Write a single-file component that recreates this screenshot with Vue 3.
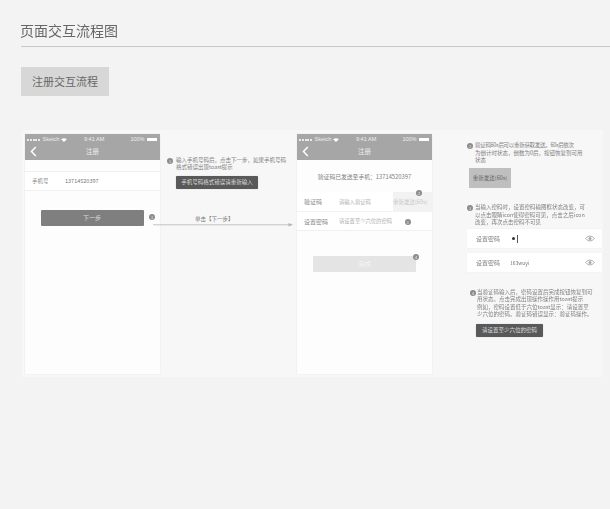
<script setup>
const statusDots = 5
</script>

<template>
  <div class="page">
    <h1 class="title">页面交互流程图</h1>
    <div class="rule"></div>
    <div class="tag">注册交互流程</div>

    <section class="panel">
      <div class="phone">
        <header class="head">
          <div class="status">
            <span class="carrier"><i v-for="n in statusDots" :key="n" class="dot"></i> Sketch
              <svg class="wifi" viewBox="0 0 10 7" width="6" height="4"><path d="M0 2.4a7 7 0 0 1 10 0L5 7z" fill="#fff"/></svg>
            </span>
            <span class="clock">9:41 AM</span>
            <span class="batt">100% <i class="cell"></i></span>
          </div>
          <div class="nav">
            <svg class="back" viewBox="0 0 7 11" width="7" height="11"><path d="M5.8 1 1.5 5.5l4.3 4.5" fill="none" stroke="#fff" stroke-width="1.5"/></svg>
            <span>注册</span>
          </div>
        </header>
        <div class="row first-row">
          <span class="lab">手机号</span><span class="val">13714520397</span>
        </div>
        <div class="next">下一步</div>
      </div>

      <div class="mid">
        <div class="note"><i class="num">1</i><p>输入手机号码后，点击下一步，如果手机号码<br>格式错误出现toast提示</p></div>
        <div class="toast toast-a">手机号码格式错误请重新输入</div>
        <div class="click">单击【下一步】</div>
      </div>

      <div class="phone">
        <header class="head">
          <div class="status">
            <span class="carrier"><i v-for="n in statusDots" :key="n" class="dot"></i> Sketch
              <svg class="wifi" viewBox="0 0 10 7" width="6" height="4"><path d="M0 2.4a7 7 0 0 1 10 0L5 7z" fill="#fff"/></svg>
            </span>
            <span class="clock">9:41 AM</span>
            <span class="batt">100% <i class="cell"></i></span>
          </div>
          <div class="nav">
            <svg class="back" viewBox="0 0 7 11" width="7" height="11"><path d="M5.8 1 1.5 5.5l4.3 4.5" fill="none" stroke="#fff" stroke-width="1.5"/></svg>
            <span>注册</span>
          </div>
        </header>
        <div class="sent">验证码已发送至手机：13714520397</div>
        <div class="row code-row">
          <span class="lab lab2">验证码</span><span class="hint">请输入验证码</span>
          <span class="resend">重新发送(60s)</span>
        </div>
        <div class="row pwd-row">
          <span class="lab lab2">设置密码</span><span class="hint">请设置至少六位的密码</span>
        </div>
        <div class="done">完成</div>
      </div>

      <div class="side">
        <div class="note"><i class="num">2</i><p><span class="tight">验证码60s后可以重新获取发送。60s后依次</span><br>为倒计时状态，倒数为0后，按钮恢复到可用<br>状态</p></div>
        <div class="resend-btn">重新发送(60s)</div>
        <div class="note note-2"><i class="num">3</i><p>当输入密码时，设置密码输图框状态改变，可<br>以点击眼睛icon使得密码可见，点击之后icon<br>改变，再次点击密码不可见</p></div>
        <div class="field field-1">
          <span class="f-lab">设置密码</span><span class="f-val"><b class="bullet"></b><i class="caret"></i></span>
          <svg class="eye" viewBox="0 0 12 8" width="10" height="7"><path d="M.7 4C3.800.2 8.200.2 11.300 4 8.200 7.800 3.800 7.800.7 4z" fill="none" stroke="#aaa" stroke-width="1.200"/><circle cx="6" cy="4" r="1.800" fill="#aaa"/></svg>
        </div>
        <div class="field field-2">
          <span class="f-lab">设置密码</span><span class="f-val">163wuyi</span>
          <svg class="eye" viewBox="0 0 12 8" width="10" height="7"><path d="M.7 4C3.800.2 8.200.2 11.300 4 8.200 7.800 3.800 7.800.7 4z" fill="none" stroke="#aaa" stroke-width="1.200"/><circle cx="6" cy="4" r="1.800" fill="#aaa"/></svg>
        </div>
        <div class="note note-3"><i class="num">4</i><p>当验证码输入后，密码设置后完成按钮恢复到可<br>用状态。点击完成出现操作操作用toast提示<br>例如，密码设置低于六位toast显示：请设置至<br>少六位的密码。验证码错误显示：验证码操作。</p></div>
        <div class="toast toast-c">请设置至少六位的密码</div>
      </div>

      <i class="num b1">1</i>
      <i class="num b2">2</i>
      <i class="num b3">3</i>
      <i class="num b4">4</i>
      <svg class="arrow" viewBox="0 0 140 6" width="140" height="6"><path d="M0 2.800H137" stroke="#c4c4c4" fill="none"/><path d="M140 2.800 135.500 1v3.600z" fill="#b5b5b5"/></svg>
    </section>
  </div>
</template>

<style>
html, body { margin: 0; background: #f3f3f3; }
</style>

<style scoped>
.page {
  width: 610px;
  height: 509px;
  overflow: hidden;
  background: #f3f3f3;
  color: #666;
  font-family: "Noto Sans CJK SC", "Liberation Sans", sans-serif;
}
.title {
  margin: 0;
  padding: 21px 0 0 20px;
  height: 25px;
  font-size: 14px;
  line-height: 19px;
  font-weight: 400;
  color: #666;
  filter: blur(.25px);
}
.rule { height: 1px; margin-left: 21px; background: #c8c8c8; }
.tag {
  width: 88px;
  height: 29px;
  margin: 20px 0 0 21px;
  background: #d7d7d7;
  font-size: 11px;
  line-height: 29px;
  text-align: center;
  color: #666;
}
.panel {
  position: relative;
  display: flex;
  width: 581px;
  height: 247px;
  margin: 34px 0 0 22px;
  background: #f7f7f7;
  box-sizing: border-box;
  padding: 4px 0 0 3px;
  filter: blur(.35px);
}
.phone {
  position: relative;
  flex: none;
  width: 135px;
  height: 240px;
  background: #fdfdfd;
  box-shadow: 0 0 1px #ddd;
}
.head { height: 26px; background: #a6a6a6; color: #fff; }
.status {
  display: flex;
  justify-content: space-between;
  padding: 0 3px 0 2px;
  height: 10px;
  font-size: 5.500px;
  line-height: 10px;
  color: #eee;
  font-family: "Liberation Sans", sans-serif;
}
.dot { display: inline-block; width: 2px; height: 2px; margin-right: .8px; border-radius: 50%; background: #fff; vertical-align: .5px; }
.wifi { vertical-align: -0.500px; }
.clock { margin-left: -9px; }
.cell { display: inline-block; width: 10px; height: 3.500px; background: #fff; vertical-align: 0; margin-left: 1px; }
.nav { position: relative; height: 16px; font-size: 6.500px; line-height: 15px; text-align: center; color: #eee; }
.back { position: absolute; left: 5px; top: 2px; }
.row { display: flex; align-items: center; background: #fff; box-sizing: border-box; }
.first-row { height: 20px; margin-top: 11px; border-top: 1px solid #f0f0f0; border-bottom: 1px solid #f0f0f0; }
.lab { width: 33px; margin-left: 7px; font-size: 5.500px; color: #888; }
.val { font-size: 5.500px; color: #777; }
.next {
  width: 103px;
  height: 16px;
  margin: 19px 0 0 15.500px;
  background: #7f7f7f;
  border-radius: 1px;
  font-size: 6px;
  line-height: 16px;
  text-align: center;
  color: #ddd;
}
.mid { flex: none; width: 137px; padding-left: 7px; box-sizing: border-box; position: relative; }
.note { position: relative; display: flex; }
.note p { margin: 0; font-size: 5.500px; line-height: 7.500px; color: #808080; white-space: nowrap; }
.tight { letter-spacing: -.3px; }
.num {
  display: block;
  flex: none;
  width: 6px;
  height: 6px;
  border-radius: 50%;
  background: #8c8c8c;
  color: #eee;
  font-size: 4px;
  line-height: 6px;
  font-style: normal;
  text-align: center;
}
.mid .note { margin-top: 22.500px; }
.mid .num { margin: 1px 3px 0 0; }
.toast {
  height: 13px;
  background: #595959;
  border-radius: 1px;
  color: #ddd;
  font-size: 5.500px;
  line-height: 13px;
  text-align: center;
  box-shadow: 0 0 1px #aaa;
}
.toast-a { width: 82px; margin: 4px 0 0 9px; }
.click { position: absolute; left: 35px; top: 81px; font-size: 5.500px; line-height: 8px; color: #777; white-space: nowrap; }
.sent { margin-top: 12px; height: 20px; font-size: 5.800px; line-height: 9px; text-align: center; color: #808080; white-space: nowrap; }
.code-row { height: 20px; border-bottom: 1px solid #f2f2f2; }
.pwd-row { height: 19px; border-bottom: 1px solid #f0f0f0; }
.lab2 { font-size: 6px; width: 35px; color: #888; }
.hint { font-size: 5.300px; color: #b0b0b0; white-space: nowrap; }
.resend {
  margin-left: auto;
  width: 39px;
  height: 100%;
  background: #f2f2f2;
  color: #c8c8c8;
  font-size: 5.500px;
  line-height: 20px;
  white-space: nowrap;
  overflow: hidden;
}
.done {
  width: 103px;
  height: 16px;
  margin: 25px 0 0 16px;
  background: #e4e4e4;
  border-radius: 1px;
  color: #f6f6f6;
  font-size: 6px;
  line-height: 16px;
  text-align: center;
}
.side { flex: none; width: 136px; margin-left: 35px; padding-top: 8px; }
.side .num { margin: 1px 0 0 0; }
.side .note p { margin-left: 2px; }
.resend-btn {
  width: 42px;
  height: 20px;
  margin: 3px 0 0 2px;
  background: #bfbfbf;
  color: #666;
  font-size: 5.500px;
  line-height: 20px;
  text-align: center;
}
.note-2 { margin-top: 16.500px; }
.field {
  position: relative;
  display: flex;
  align-items: center;
  width: 135px;
  height: 19px;
  background: #fff;
  box-sizing: border-box;
  padding-left: 9px;
  box-shadow: 0 0 1px #e6e6e6;
}
.field-1 { margin-top: 2.500px; }
.field-2 { margin-top: 5px; }
.f-lab { width: 34px; color: #808080; font-size: 6px; }
.f-val { color: #777; display: flex; align-items: center; font-size: 5px; }
.bullet { width: 3px; height: 3px; margin-left: 2px; border-radius: 50%; background: #333; }
.caret { width: 1px; height: 8px; margin-left: 2px; background: #555; }
.eye { position: absolute; right: 7px; top: 6px; }
.note-3 { margin: 16.500px 0 0 3px; }
.side .note-3 p { margin-left: 1px; }
.toast-c { width: 67px; margin: 5.500px 0 0 9px; }
.b1 { position: absolute; left: 127px; top: 84px; }
.b2 { position: absolute; left: 394px; top: 59.500px; }
.b3 { position: absolute; left: 382.500px; top: 89px; }
.b4 { position: absolute; left: 391px; top: 123.500px; }
.arrow { position: absolute; left: 131px; top: 92px; }
</style>
